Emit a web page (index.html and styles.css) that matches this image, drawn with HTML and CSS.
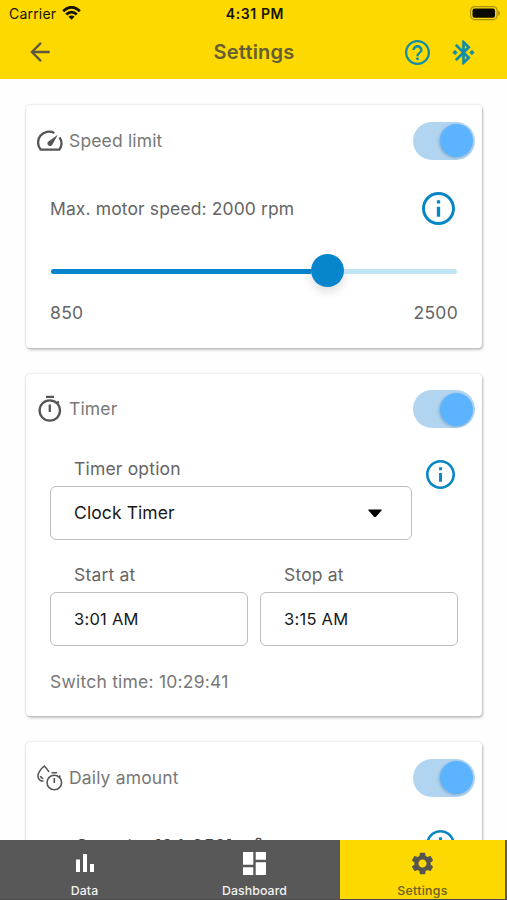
FILE: index.html
```html
<!DOCTYPE html>
<html lang="en">
<head>
<meta charset="utf-8">
<title>Settings</title>
<link rel="stylesheet" href="styles.css">
</head>
<body>
<svg class="defs" width="0" height="0" aria-hidden="true">
  <symbol id="info" viewBox="2 2 20 20"><path d="M11 7h2v2h-2zm0 4h2v6h-2zm1-9C6.48 2 2 6.48 2 12s4.48 10 10 10 10-4.480 10-10S17.520 2 12 2zm0 18.200c-4.520 0-8.200-3.680-8.200-8.200S7.480 3.800 12 3.800s8.200 3.680 8.200 8.200-3.680 8.200-8.200 8.200z"/></symbol>
</svg>
<div class="app">
  <header class="header">
    <div class="status">
      <div class="carrier"><span>Carrier</span>
        <svg width="19" height="14" viewBox="0 0 19 14"><g fill="none" stroke="#161400" stroke-width="2.800"><path d="M1.200 5.200C6-.1 13-.1 17.800 5.200"/><path d="M4.300 8.500c3-3.200 7.400-3.200 10.400 0"/></g><path fill="#161400" d="M6.500 10.700c1.800-1.600 4.200-1.600 6 0l-3 3z"/></svg>
      </div>
      <span class="clock">4:31 PM</span>
      <svg class="battery" width="31" height="15" viewBox="0 0 31 15"><rect x=".6" y=".6" width="26.500" height="13" rx="4" fill="none" stroke="#a8920c" stroke-width="1.200"/><rect x="2.500" y="2.500" width="22.500" height="9.300" rx="2" fill="#0b0a00"/><path d="M28.200 4.700v5q1.800-.7 1.800-2.500t-1.800-2.500z" fill="#a08b10"/></svg>
    </div>
    <div class="bar">
      <svg class="back" width="20" height="20" viewBox="0 0 20 20"><path d="M19.700 10H2M11 .9L1.900 10l9.100 9.100" fill="none" stroke="#5d573f" stroke-width="2.300"/></svg>
      <h1>Settings</h1>
      <div class="actions">
        <svg width="25" height="25" viewBox="2 2 20 20"><path d="M11 18h2v-2h-2v2zm1-16C6.480 2 2 6.480 2 12s4.480 10 10 10 10-4.480 10-10S17.520 2 12 2zm0 18.200c-4.520 0-8.200-3.680-8.200-8.200S7.480 3.800 12 3.800s8.200 3.680 8.200 8.200-3.680 8.200-8.200 8.200zM12 6c-2.210 0-4 1.790-4 4h1.900c0-1.100 1-2.100 2.100-2.100s2.100 1 2.100 2.100c0 2-3 1.750-3 5H13c0-2.250 3-2.500 3-5 0-2.210-1.790-4-4-4z"/></svg>
        <svg width="29" height="29" viewBox="0 0 24 24"><path d="M7 12l-2-2-2 2 2 2 2-2zm10.710-4.290L12 2h-1v7.590L6.410 5 5 6.410 10.590 12 5 17.590 6.410 19 11 14.410V22h1l5.710-5.710-4.300-4.290 4.300-4.290zM13 5.830l1.880 1.880L13 9.590V5.830zm1.880 10.460L13 18.170v-3.760l1.880 1.880zM19 10l-2 2 2 2 2-2-2-2z" stroke="#0e8caa" stroke-width=".3"/></svg>
      </div>
    </div>
  </header>

  <main class="content">
    <section class="card speed">
      <div class="card-head">
        <svg width="26" height="22" viewBox="0 0 26 22"><path d="M17.300 2.900A11 11 0 0 0 3.600 19.600h18.800A11 11 0 0 0 22.500 7.300" fill="none" stroke="#555" stroke-width="2.300" stroke-linejoin="round"/><path d="M20.800 4.700l-9 6.500a2.600 2.600 0 1 0 3.500 3.500z" fill="#555"/></svg>
        <h2>Speed limit</h2><span class="switch"></span>
      </div>
      <div class="speed-row"><span>Max. motor speed: 2000 rpm</span><svg class="info" width="33" height="33"><use href="#info"/></svg></div>
      <div class="slider"><div class="fill"></div><div class="knob"></div><div class="rest"></div></div>
      <div class="range"><span>850</span><span>2500</span></div>
    </section>

    <section class="card timer">
      <div class="card-head">
        <svg width="26" height="28" viewBox="0 0 26 28"><g fill="none" stroke="#555" stroke-width="2.300"><circle cx="12.800" cy="15.500" r="10.200"/><path d="M9 1.800h8M12.800 9.500v7.500M19.500 8.800l2.300-2.300" /></g></svg>
        <h2>Timer</h2><span class="switch"></span>
      </div>
      <div class="option-row">
        <div class="field option"><label>Timer option</label><div class="box">Clock Timer<svg width="14" height="9" viewBox="0 0 14 9"><path d="M.5.500h13q.5.500 0 1L8.200 7.500Q7 8.900 5.800 7.500L.5 1.500Q0 1 .5.500z"/></svg></div></div>
        <svg class="info" width="29" height="29"><use href="#info"/></svg>
      </div>
      <div class="times">
        <div class="field"><label>Start at</label><div class="box">3:01 AM</div></div>
        <div class="field"><label>Stop at</label><div class="box">3:15 AM</div></div>
      </div>
      <p class="switch-time">Switch time: 10:29:41</p>
    </section>

    <section class="card daily">
      <div class="card-head">
        <svg width="26" height="26" viewBox="0 0 26 26"><g fill="none" stroke="#555" stroke-width="1.600"><path d="M12 6.800C10.500 4.300 8.600 2.300 7.200 1 4.500 3.400 1 7.500 1 11c0 3.100 2.200 5 5.500 5.300M3.500 11c.3 1.500 1.300 2.400 2.800 2.700"/><circle cx="17.300" cy="17.500" r="7.300"/><path d="M14.500 7.700h5.600M17.300 13v5M22 12l1.400-1.400"/></g></svg>
        <h2>Daily amount</h2><span class="switch"></span>
      </div>
      <div class="quantity"><span>Quantity [0.1-250] m³</span><svg class="info" width="29" height="29"><use href="#info"/></svg></div>
    </section>
  </main>

  <nav class="tabs">
    <a class="tab"><svg width="18" height="18" viewBox="0 0 18 18"><path d="M0 5.500h4V18H0zM7 0h4v18H7zM14 10h4v8h-4z"/></svg><span>Data</span></a>
    <a class="tab"><svg width="23" height="23" viewBox="0 0 23 23"><path d="M0 0h10.300v12.700H0zM12.700 0H23v7.700H12.700zM0 15.300h10.300V23H0zM12.700 10.300H23V23H12.700z"/></svg><span>Dashboard</span></a>
    <a class="tab active"><svg width="27" height="27" viewBox="0 0 24 24"><path d="M19.140 12.940c.04-.3.060-.61.060-.94 0-.32-.02-.64-.07-.94l2.030-1.580c.18-.14.230-.41.120-.61l-1.920-3.320c-.12-.22-.37-.29-.59-.22l-2.390.96c-.5-.38-1.030-.7-1.620-.94l-.36-2.540c-.04-.24-.24-.41-.48-.41h-3.840c-.24 0-.43.170-.47.410l-.36 2.540c-.59.240-1.130.570-1.620.940l-2.390-.96c-.22-.08-.47 0-.59.220L2.740 8.870c-.12.210-.08.470.12.610l2.030 1.580c-.05.300-.09.630-.09.940s.02.640.07.940l-2.030 1.580c-.18.140-.23.410-.12.610l1.920 3.320c.12.220.37.290.59.220l2.390-.96c.5.380 1.030.7 1.620.94l.36 2.540c.05.240.24.410.48.410h3.840c.24 0 .44-.17.470-.41l.36-2.540c.59-.24 1.130-.56 1.620-.94l2.390.96c.22.080.47 0 .59-.22l1.920-3.320c.12-.22.070-.47-.12-.61l-2.010-1.580zM12 15.600c-1.980 0-3.600-1.620-3.600-3.600s1.620-3.600 3.600-3.600 3.600 1.620 3.600 3.600-1.620 3.600-3.600 3.600z"/></svg><span>Settings</span></a>
  </nav>
</div>
</body>
</html>
```
FILE: styles.css
```css
* { box-sizing: border-box; }
body { margin: 0; background: #fefefe; font: 17.5px/24px Inter, "Liberation Sans", sans-serif; letter-spacing: .1px; color: #656565; }
h1, h2, p { margin: 0; font-weight: 400; }
svg { display: block; flex: none; }
.defs { position: absolute; }
.app { height: 900px; display: flex; flex-direction: column; overflow: hidden; }
.header { height: 79px; flex: none; background: #fdd900; }
.status { height: 28px; display: grid; grid-template-columns: 1fr auto 1fr; align-items: center; padding: 0 6px 0 9px; color: #161400; font-size: 14px; line-height: 28px; }
.carrier { display: flex; gap: 6px; align-items: center; letter-spacing: .2px; }
.carrier svg { margin-top: -2px; }
.clock { font-weight: 600; font-size: 14px; letter-spacing: .6px; }
.battery { justify-self: end; margin-top: -1px; }
.bar { height: 48px; display: grid; grid-template-columns: 1fr auto 1fr; align-items: center; padding: 0 29px 0 30px; }
.bar h1 { font-size: 20px; font-weight: 600; letter-spacing: .2px; color: #655f32; }
.actions { display: flex; align-items: center; justify-content: flex-end; gap: 19px; fill: #0e8caa; }
.content { flex: 1; min-height: 0; overflow: hidden; padding: 26px 25px 0 26px; display: flex; flex-direction: column; gap: 26px; }
.card { flex: none; background: #fff; border-radius: 4px; box-shadow: 0 0 2px rgba(0,0,0,.22), 1px 2px 3px rgba(0,0,0,.22); }
.speed { height: 243px; }
.timer { height: 342px; }
.daily { height: 243px; }
.card-head { height: 71px; display: flex; align-items: center; padding: 0 7px 0 11px; }
.timer .card-head { height: 70px; }
.card-head h2 { flex: 1; margin-left: 6px; font-size: 17.5px; line-height: 24px; letter-spacing: .15px; color: #787878; }
.switch { width: 62px; height: 38px; border-radius: 19px; background: #b1d5f1; display: flex; justify-content: flex-end; align-items: center; padding-right: 2px; }
.switch::after { content: ""; width: 33px; height: 33px; border-radius: 50%; background: #5cb3ff; box-shadow: -1px 1px 3px rgba(0,50,100,.25); }
.info { fill: #0786c5; }
.speed-row { height: 65px; display: flex; align-items: center; justify-content: space-between; padding: 0 27px 0 24px; letter-spacing: .12px; }
.speed-row span { padding-top: 1px; }
.slider { height: 60px; display: flex; align-items: center; margin: 0 25px; }
.fill { height: 5px; width: 260px; border-radius: 3px 0 0 3px; background: #0786ce; }
.knob { width: 33px; height: 33px; flex: none; margin-top: -1px; border-radius: 50%; background: #0786ce; box-shadow: 0 5px 10px rgba(0,0,0,.13); }
.rest { height: 5px; flex: 1; border-radius: 0 3px 3px 0; background: #bfe4f4; }
.range { display: flex; justify-content: space-between; padding: 0 24px; letter-spacing: .3px; }
.option-row { display: flex; justify-content: space-between; padding: 13px 27px 0 24px; }
.option { width: 362px; }
.option-row .info { margin-top: 3px; }
.field label { display: block; height: 29px; padding-left: 24px; line-height: 24px; letter-spacing: .18px; }
.box { height: 54px; border: 1.500px solid #bdbdbd; border-radius: 6px; padding: 0 29px 0 23px; display: flex; align-items: center; justify-content: space-between; color: #181818; }
.times { display: grid; grid-template-columns: 1fr 1fr; gap: 12px; padding: 23px 24px 0; }
.times .box { font-size: 16.5px; letter-spacing: .25px; }
.switch-time { padding: 24px 24px 0; letter-spacing: .22px; color: #777; }
.quantity { display: flex; justify-content: space-between; padding: 17px 27px 0 49px; font-size: 18px; letter-spacing: .3px; color: #444; }
.quantity span { margin-top: 5px; }
.tabs { flex: none; height: 60px; display: grid; grid-template-columns: 169px 171px 165px; background: #585858; border-bottom: 1px solid #4c4c4c; }
.tab { display: grid; grid-template-rows: 44px 13px; justify-items: center; align-items: center; color: #f2f2f2; fill: #fff; font-size: 12.300px; line-height: 13px; font-weight: 500; }
.tab svg { margin-top: 2px; }
.active { background: #fdd900; color: #6b6127; fill: #57564c; letter-spacing: .3px; }
```
